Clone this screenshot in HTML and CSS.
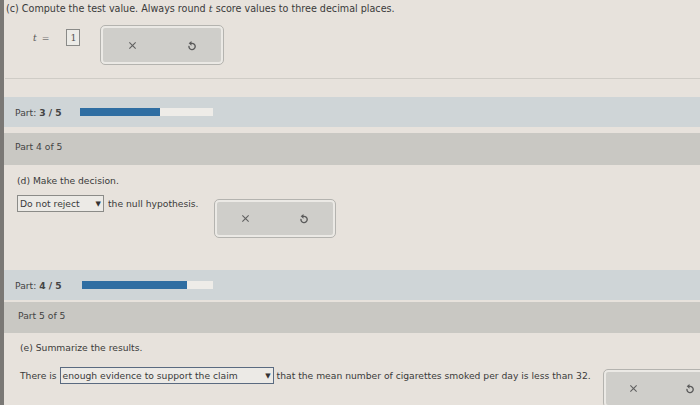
FILE: index.html
```html
<!DOCTYPE html>
<html>
<head>
<meta charset="utf-8">
<link rel="stylesheet" href="styles.css">
</head>
<body>
<div class="page">
  <section class="qc">
    <p class="prompt top">(c) Compute the test value. Always round <i class="var">t</i> score values to three decimal places.</p>
    <div class="answer-row row-c">
      <div class="tval"><i class="var">t</i> <span class="eq">=</span> <span class="inbox">1</span></div>
      <div class="btnbox box-c">
        <svg class="ico x" viewBox="0 0 10 10" width="9" height="9"><path d="M1.5 1.5 L8.5 8.5 M8.5 1.5 L1.5 8.5" stroke="#606060" stroke-width="1.2"/></svg>
        <svg class="ico undo" viewBox="0 0 10 12" width="9" height="11"><path d="M2.2 6.4 A3.5 3.5 0 1 0 5.4 3.6 L4.4 3.6" fill="none" stroke="#5a5a5a" stroke-width="1.5"/><path d="M5 1 L1.9 3.6 L5 6.2 Z" fill="#5a5a5a"/></svg>
      </div>
    </div>
    <div class="rule"></div>
  </section>

  <div class="progress p3">
    <span class="plabel">Part: <b>3 / 5</b></span>
    <div class="track"><div class="fill" style="width:60%"></div></div>
  </div>

  <div class="phead h4">Part 4 of 5</div>
  <section class="qd">
    <p class="prompt">(d) Make the decision.</p>
    <div class="answer-row row-d">
      <div class="sentence"><span class="select sel-d">Do not reject <span class="tri">&#9660;</span></span> the null hypothesis.</div>
      <div class="btnbox box-d">
        <svg class="ico x" viewBox="0 0 10 10" width="9" height="9"><path d="M1.5 1.5 L8.5 8.5 M8.5 1.5 L1.5 8.5" stroke="#606060" stroke-width="1.2"/></svg>
        <svg class="ico undo" viewBox="0 0 10 12" width="9" height="11"><path d="M2.2 6.4 A3.5 3.5 0 1 0 5.4 3.6 L4.4 3.6" fill="none" stroke="#5a5a5a" stroke-width="1.5"/><path d="M5 1 L1.9 3.6 L5 6.2 Z" fill="#5a5a5a"/></svg>
      </div>
    </div>
  </section>

  <div class="progress p4">
    <span class="plabel">Part: <b>4 / 5</b></span>
    <div class="track"><div class="fill" style="width:80%"></div></div>
  </div>

  <div class="phead h5">Part 5 of 5</div>
  <section class="qe">
    <p class="prompt">(e) Summarize the results.</p>
    <div class="answer-row row-e">
      <div class="sentence">There is <span class="select sel-e">enough evidence to support the claim <span class="tri">&#9660;</span></span> that the mean number of cigarettes smoked per day is less than 32.</div>
      <div class="btnbox box-e">
        <svg class="ico x" viewBox="0 0 10 10" width="9" height="9"><path d="M1.5 1.5 L8.5 8.5 M8.5 1.5 L1.5 8.5" stroke="#606060" stroke-width="1.2"/></svg>
        <svg class="ico undo" viewBox="0 0 10 12" width="9" height="11"><path d="M2.2 6.4 A3.5 3.5 0 1 0 5.4 3.6 L4.4 3.6" fill="none" stroke="#5a5a5a" stroke-width="1.5"/><path d="M5 1 L1.9 3.6 L5 6.2 Z" fill="#5a5a5a"/></svg>
      </div>
    </div>
  </section>
</div>
</body>
</html>
```

FILE: styles.css
```css
html, body { margin: 0; padding: 0; }
body {
  width: 700px; height: 405px; overflow: hidden;
  background: #e7e2dc;
  font-family: "DejaVu Sans", Verdana, sans-serif;
  font-size: 9.2px;
  color: #3a3a3a;
}
.page {
  border-left: 4px solid #7a7875;
  height: 405px;
  box-sizing: border-box;
  display: flex; flex-direction: column;
}
.prompt { margin: 0; }
.var { font-family: "DejaVu Serif", serif; font-style: italic; }

.qc { padding: 0 0 0 1px; height: 97px; flex-shrink: 0; box-sizing: border-box; display: flex; flex-direction: column; }
.prompt.top { margin-top: 3px; padding-left: 1px; font-size: 9.6px; }
.answer-row { display: flex; align-items: flex-start; }
.row-c { margin-top: 12px; padding-left: 28px; }
.tval { display: flex; align-items: center; gap: 5px; margin-top: 3px; color: #555; }
.eq { color: #777; margin-right: 12px; }
.inbox {
  display: inline-flex; align-items: center; justify-content: center;
  width: 12px; height: 15px; border: 1px solid #8a8a88; background: #ecebe7;
  font-family: "DejaVu Serif", serif; font-size: 9.5px;
}
.btnbox {
  display: flex; align-items: center; justify-content: space-around;
  background: #cfceca;
  border: 2px solid #ebe9e5;
  outline: 1px solid #b4b3af;
  border-radius: 4px;
  box-sizing: border-box;
  flex-shrink: 0;
}
.box-c { width: 122px; height: 38px; margin-left: 21px; }
.rule { margin-top: 14px; border-top: 1px solid #cfccc6; width: 100%; }

.progress {
  height: 30px; background: #cfd5d7; flex-shrink: 0;
  display: flex; align-items: center;
  padding-left: 11px; color: #444;
}
.plabel { width: 65px; }
.track { width: 133px; height: 8px; background: #eeece8; }
.fill { height: 100%; background: #2f6ea2; }
.p4 { margin-top: 15px; }
.p4 .track { margin-left: 2px; width: 131px; }

.phead {
  background: #c9c8c3; height: 32px; box-sizing: border-box; flex-shrink: 0;
  padding: 8px 0 0 11px; color: #444;
}
.h4 { margin-top: 6px; }
.h5 { margin-top: 2px; height: 31px; padding-left: 14px; }

.qd { padding: 10px 0 0 13px; height: 90px; box-sizing: border-box; flex-shrink: 0; }
.row-d { margin-top: 9px; }
.sentence { display: flex; align-items: center; gap: 4px; white-space: nowrap; }
.select {
  display: inline-flex; align-items: center; justify-content: space-between;
  border: 1px solid #8b8b88; background: #eceae6; height: 17px; box-sizing: border-box;
  padding: 0 2px; gap: 6px;
}
.sel-d { width: 87px; }
.sel-e { width: 214px; border-color: #5a6a80; }
.tri { font-size: 7px; color: #333; }
.box-d { width: 120px; height: 37px; margin-left: 16px; margin-top: 5px; }

.qe { padding: 9px 0 0 16px; flex: 1; }
.row-e { margin-top: 14px; }
.row-e .sentence { gap: 3px; }
.box-e { width: 116px; height: 37px; margin-left: 13px; margin-top: 3px; }
```
